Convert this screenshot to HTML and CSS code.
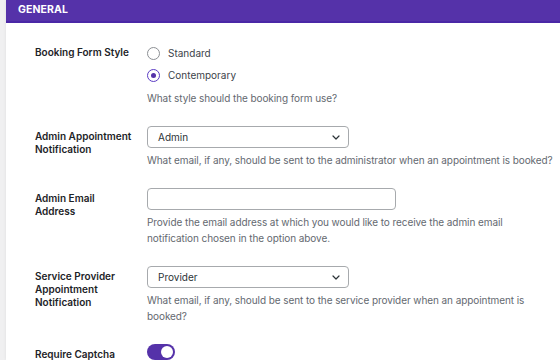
FILE: index.html
```html
<!DOCTYPE html>
<html>
<head>
<meta charset="utf-8">
<link rel="stylesheet" href="styles.css">
</head>
<body>
<div class="panel">
  <div class="panel-head">GENERAL</div>
  <div class="panel-body">
    <div class="row">
      <div class="label">Booking Form Style</div>
      <div class="control">
        <label class="radio"><span class="dot"></span><span>Standard</span></label>
        <label class="radio"><span class="dot checked"></span><span>Contemporary</span></label>
        <p class="desc">What style should the booking form use?</p>
      </div>
    </div>
    <div class="row">
      <div class="label">Admin Appointment Notification</div>
      <div class="control">
        <div class="select"><span>Admin</span><svg class="chev" width="8" height="5" viewBox="0 0 8 5"><path d="M1 1 L4 4 L7 1" fill="none" stroke="#2c3338" stroke-width="1.2" stroke-linecap="round" stroke-linejoin="round"/></svg></div>
        <p class="desc">What email, if any, should be sent to the administrator when an appointment is booked?</p>
      </div>
    </div>
    <div class="row">
      <div class="label">Admin Email<br>Address</div>
      <div class="control">
        <div class="input"></div>
        <p class="desc">Provide the email address at which you would like to receive the admin email notification chosen in the option above.</p>
      </div>
    </div>
    <div class="row">
      <div class="label">Service Provider Appointment Notification</div>
      <div class="control">
        <div class="select"><span>Provider</span><svg class="chev" width="8" height="5" viewBox="0 0 8 5"><path d="M1 1 L4 4 L7 1" fill="none" stroke="#2c3338" stroke-width="1.2" stroke-linecap="round" stroke-linejoin="round"/></svg></div>
        <p class="desc">What email, if any, should be sent to the service provider when an appointment is booked?</p>
      </div>
    </div>
    <div class="row">
      <div class="label">Require Captcha</div>
      <div class="control">
        <div class="toggle"><span class="knob"></span></div>
      </div>
    </div>
  </div>
</div>
</body>
</html>
```

FILE: styles.css
```css
html, body {
  margin: 0;
  padding: 0;
  background: #f0f0f1;
  font-family: Inter, "Noto Sans", "Liberation Sans", sans-serif;
  overflow: hidden;
}
.panel {
  margin-left: 6px;
  background: #ffffff;
  box-shadow: 0 0 3px rgba(0,0,0,0.08);
  height: 360px;
}
.panel-head {
  height: 21px;
  background: #5532a9;
  border-bottom: 2px solid #4a27a6;
  color: #ffffff;
  font-weight: 700;
  font-size: 10.5px;
  line-height: 19px;
  padding-left: 12px;
  letter-spacing: 0.1px;
}
.panel-body {
  padding: 9px 0 0 29px;
}
.row {
  display: flex;
  padding: 10px 0;
}
.label {
  width: 112px;
  flex: none;
  padding-top: 4px;
  padding-right: 10px;
  box-sizing: border-box;
  font-size: 10px;
  font-weight: 600;
  line-height: 13px;
  color: #1d2327;
}
.control {
  flex: 1;
}
.radio {
  display: flex;
  align-items: center;
  height: 22px;
  font-size: 10px;
  color: #3c434a;
}
.dot {
  width: 11px;
  height: 11px;
  border: 1px solid #8c8f94;
  border-radius: 50%;
  margin-right: 8px;
  box-sizing: content-box;
  position: relative;
}
.dot.checked {
  border-color: #5b3cc4;
}
.dot.checked::after {
  content: "";
  position: absolute;
  left: 3px;
  top: 3px;
  width: 5px;
  height: 5px;
  border-radius: 50%;
  background: #5532a9;
}
.desc {
  margin: 4px 0 0;
  font-size: 10px;
  letter-spacing: -0.08px;
  line-height: 16px;
  color: #646970;
  max-width: 408px;
}
.select {
  height: 20px;
  border: 1px solid #a7aaad;
  border-radius: 4px;
  display: flex;
  align-items: center;
  justify-content: space-between;
  padding: 0 8px 0 10px;
  box-sizing: content-box;
  width: 182px;
  font-size: 10px;
  color: #2c3338;
}
.input {
  width: 247px;
  height: 20px;
  border: 1px solid #a7aaad;
  border-radius: 4px;
}
.toggle {
  width: 28px;
  height: 16px;
  border-radius: 8px;
  background: #5532a9;
  position: relative;
}
.knob {
  position: absolute;
  right: 2px;
  top: 2px;
  width: 12px;
  height: 12px;
  border-radius: 50%;
  background: #ffffff;
}
```
